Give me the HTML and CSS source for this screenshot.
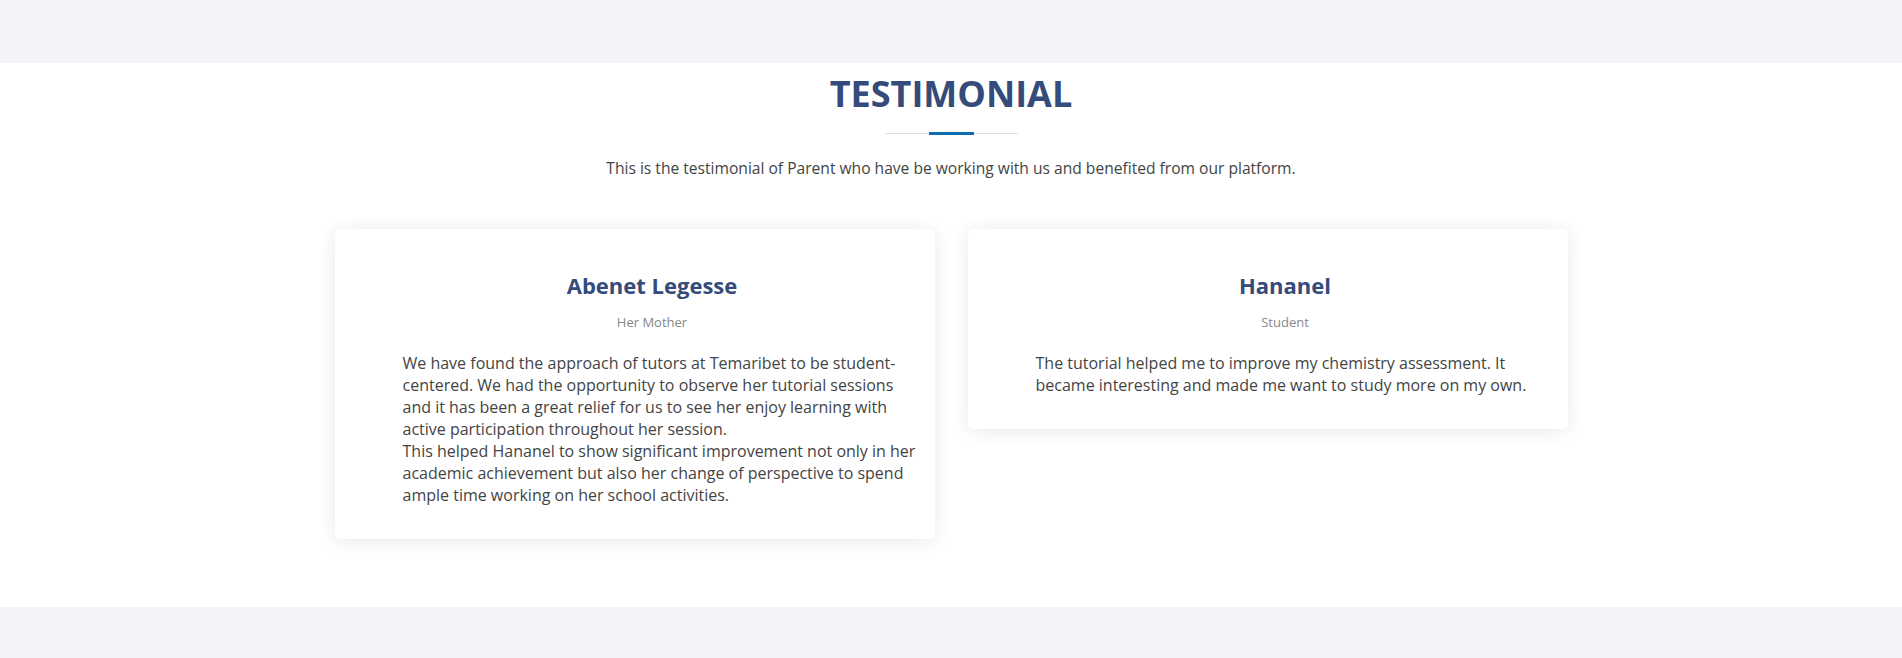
FILE: index.html
```html
<!DOCTYPE html>
<html lang="en">
<head>
<meta charset="utf-8">
<title>Testimonial</title>
<link rel="stylesheet" href="styles.css">
</head>
<body>
<div class="band"></div>
<section class="testimonial">
  <h2 class="section-title">TESTIMONIAL</h2>
  <div class="divider"><span class="divider-accent"></span></div>
  <p class="section-sub">This is the testimonial of Parent who have be working with us and benefited from our platform.</p>
  <div class="cards">
    <div class="card">
      <h3 class="card-name">Abenet Legesse</h3>
      <div class="card-role">Her Mother</div>
      <p class="card-text">We have found the approach of tutors at Temaribet to be student-centered. We had the opportunity to observe her tutorial sessions and it has been a great relief for us to see her enjoy learning with active participation throughout her session.<br>This helped Hananel to show significant improvement not only in her academic achievement but also her change of perspective to spend ample time working on her school activities.</p>
    </div>
    <div class="card">
      <h3 class="card-name">Hananel</h3>
      <div class="card-role">Student</div>
      <p class="card-text">The tutorial helped me to improve my chemistry assessment. It became interesting and made me want to study more on my own.</p>
    </div>
  </div>
</section>
<div class="band band-bottom"></div>
</body>
</html>
```

FILE: styles.css
```css
html, body {
  margin: 0;
  padding: 0;
  background: #f3f4f9;
  font-family: "Open Sans", "Noto Sans", sans-serif;
}
.band {
  height: 63px;
  background: #f3f4f9;
}
.band-bottom {
  height: 51px;
}
.testimonial {
  background: #ffffff;
  padding: 9px 0 68px;
  display: flex;
  flex-direction: column;
  align-items: center;
}
.section-title {
  margin: 0;
  font-size: 36px;
  line-height: 43px;
  font-weight: 700;
  color: #344b7b;
  letter-spacing: 0;
}
.divider {
  margin-top: 17px;
  width: 133px;
  height: 3px;
  display: flex;
  align-items: center;
  justify-content: center;
  background: linear-gradient(#dddddd, #dddddd) center / 100% 1px no-repeat;
}
.divider-accent {
  width: 45px;
  height: 3px;
  background: #0f6db3;
}
.section-sub {
  margin: 21px 0 0;
  font-size: 15.6px;
  line-height: 24px;
  color: #444444;
}
.cards {
  margin-top: 49px;
  display: flex;
  gap: 33px;
  align-items: flex-start;
}
.card {
  width: 600px;
  box-sizing: border-box;
  padding: 43px 33px 33px 68px;
  background: #ffffff;
  border-radius: 5px;
  box-shadow: 0 2px 18px rgba(0, 0, 0, 0.09);
}
.card-name {
  margin: 0;
  text-align: center;
  font-size: 22px;
  line-height: 26px;
  font-weight: 700;
  color: #344b7b;
}
.card-role {
  margin-top: 14px;
  text-align: center;
  font-size: 13px;
  line-height: 20px;
  color: #888888;
}
.card-text {
  margin: 20px -19px 0 0;
  font-size: 16px;
  line-height: 22px;
  color: #444444;
}
```
